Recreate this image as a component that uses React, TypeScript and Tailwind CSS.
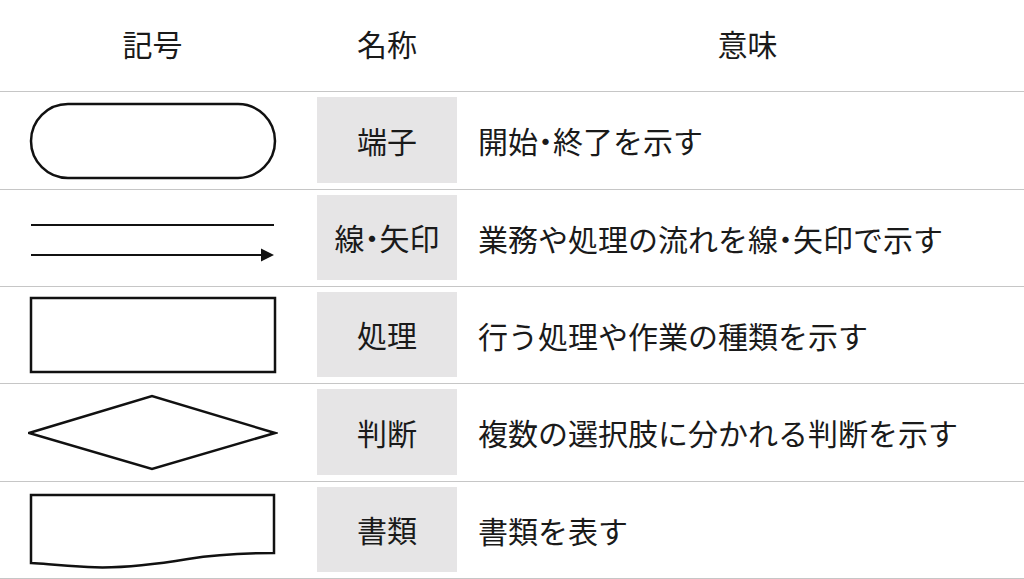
const rows = [
  { name: "端子", meaning: "開始・終了を示す", shape: "terminal", h: "h-[98px]" },
  { name: "線・矢印", meaning: "業務や処理の流れを線・矢印で示す", shape: "arrow", h: "h-[97px]" },
  { name: "処理", meaning: "行う処理や作業の種類を示す", shape: "process", h: "h-[97px]" },
  { name: "判断", meaning: "複数の選択肢に分かれる判断を示す", shape: "decision", h: "h-[98px]" },
  { name: "書類", meaning: "書類を表す", shape: "document", h: "h-[97px]" },
];

// the middle dot is set half-width like in the original table
const Text = ({ value }: { value: string }) => {
  const parts = value.split("・");
  return (
    <>
      {parts.map((p, i) => (
        <span key={i}>
          {i > 0 && <span className="[font-feature-settings:'halt']">・</span>}
          {p}
        </span>
      ))}
    </>
  );
};

// symbols are drawn in a 250x80 box, centred in the first column
const Shape = ({ kind }: { kind: string }) => {
  return (
    <svg width="250" height="80" viewBox="0 0 250 80" fill="none" stroke="#111" strokeWidth="2.5">
      {kind === "terminal" && <rect x="3" y="3" width="244" height="74" rx="37" />}
      {kind === "arrow" && (
        <>
          <line x1="3" y1="27" x2="246" y2="27" strokeWidth="2.2" />
          <line x1="3" y1="57" x2="236" y2="57" strokeWidth="2.2" />
          <polygon points="233,50.5 246,57 233,63.5" fill="#111" stroke="none" />
        </>
      )}
      {kind === "process" && <rect x="3" y="3" width="244" height="74" />}
      {kind === "decision" && <polygon points="1,40 124,3 247,40 124,76" strokeLinejoin="miter" />}
      {kind === "document" && (
        <path d="M3,5 H246 V63 C215,63 190,64 160,69 S95,79 60,77 S20,74 3,73 Z" />
      )}
    </svg>
  );
};

const App = () => {
  return (
    <div
      className="w-[1024px] h-[579px] bg-white text-[#1a1a1a] overflow-hidden"
      style={{ fontFamily: '"Noto Sans CJK JP", "Noto Sans", sans-serif' }}
    >
      <div className="flex items-center h-[92px] border-b border-[#c6c6c6] text-[30px]">
        <div className="w-[305px] text-center pb-[4px]">記号</div>
        <div className="ml-[12px] w-[140px] text-center pb-[4px]">名称</div>
        <div className="flex-1 text-center pl-[14px] pb-[4px]">意味</div>
      </div>
      {rows.map((row) => (
        <div key={row.name} className={`flex items-stretch ${row.h} border-b border-[#c6c6c6]`}>
          <div className="w-[305px] flex items-center justify-center">
            <Shape kind={row.shape} />
          </div>
          <div className="ml-[12px] w-[140px] my-[5px] mb-[6px] bg-[#e6e5e6] flex items-center justify-center text-[30px]">
            <Text value={row.name} />
          </div>
          <div className="flex items-center pl-[21px] text-[30px]">
            <Text value={row.meaning} />
          </div>
        </div>
      ))}
    </div>
  );
};

export default App;
